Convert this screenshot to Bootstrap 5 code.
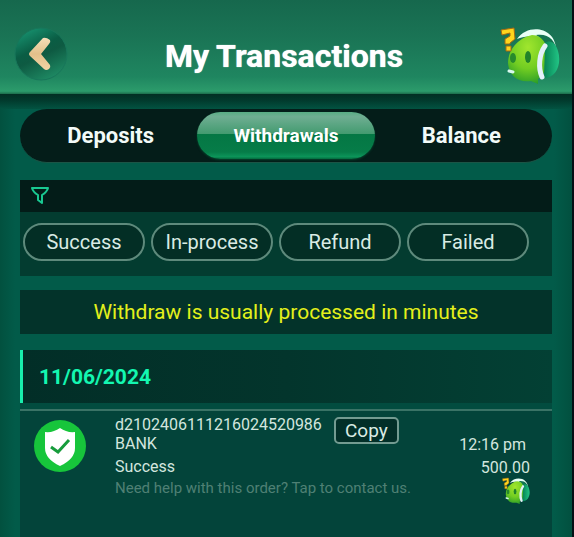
<!DOCTYPE html>
<html lang="en">
<head>
<meta charset="utf-8">
<meta name="viewport" content="width=device-width, initial-scale=1">
<title>My Transactions</title>
<link href="https://cdn.jsdelivr.net/npm/bootstrap@5.3.0/dist/css/bootstrap.min.css" rel="stylesheet">
<style>
body{font-family:Roboto,"Liberation Sans",sans-serif;background:#040f14;color:#d3e6df;line-height:19px}
.screen{margin-right:2px;min-height:100vh;background:linear-gradient(90deg,#02513f,#025b49 15px,#025b49 calc(100% - 18px),#02503f)}
.top-bar{height:94px;padding:10px 12px 0;background:linear-gradient(#16684d,#1a7455 40%,#1f8660 82%,#2c9b6b 97%,#1c6c4b)}
.top-shade{height:15px;background:linear-gradient(#022e23,#01392c 40%,#025341)}
.top-bar h1{font-size:32px;line-height:36px;color:#fff;text-shadow:0 0 1px #fff}
.round-back{width:56px;height:56px}
.helper{width:60px;height:60px}
.content-area{padding:0 20px}
.tabs{background:#041d19;border-bottom:1px solid #1b5546;padding:3px 0}
.tabs button{height:47px;font-size:22px;line-height:26px;color:#f2fbf8;font-weight:700}
.tabs button.active{font-size:19px;color:#fff;background:linear-gradient(#58ad84 0,#6fae92 10%,#439b70 46%,#047744 47%,#067c48 85%,#0c9459 95%,#036b3e);box-shadow:0 1px 2px #03452c}
.filter{margin-top:17px;background:#033c30}
.filter-head{height:32px;background:#031c18;padding:6px 11px}
.chips{padding:11px 3px 15px;gap:6px}
.chip{width:122px;height:38px;border:2px solid #5e8a7c;background:#032e25;color:#d9ebe4;font-size:20px;line-height:24px}
.notice{margin-top:14px;height:44px;background:#03332a;color:#e3f01b;font-size:21px;line-height:45px}
.log{margin-top:16px;background:#03443a;min-height:calc(100vh - 350px)}
.log-date{height:53px;border-left:3px solid #18efad;padding-left:16px;background:linear-gradient(90deg,#022e27,#03352c 50%,#034034);color:#13f7b1;font-size:21px;line-height:54px;font-weight:700}
.log-gap{height:6px;background:#024c3f}
.entry{border-top:2px solid #3a7366;padding:4px 22px 0 13px;font-size:16px}
.badge-ok{width:54px;height:54px;margin-top:5px}
.entry-text{margin-left:28px}
.copy{width:65px;height:27px;border:2px solid #739b91;border-radius:5px;background:#022f28;color:#d9ebe4;font-size:19px;line-height:23px;margin:2px 0 0 12px}
.hint{font-size:15px;color:#4f8074;line-height:24px}
.hint:hover{color:#7aa89b}
.state{margin-top:4px}
.helper-small{width:28px;height:28px}
</style>
<script src="https://cdn.jsdelivr.net/npm/bootstrap@5.3.0/dist/js/bootstrap.bundle.min.js"></script>
</head>
<body>
<svg width="0" height="0" class="position-absolute" aria-hidden="true">
<defs>
<radialGradient id="face" cx=".5" cy=".25" r=".8"><stop offset="0" stop-color="#a1e62e"/><stop offset=".55" stop-color="#72cd22"/><stop offset="1" stop-color="#249928"/></radialGradient>
<linearGradient id="cup" x1="0" x2="1"><stop offset="0" stop-color="#068255"/><stop offset="1" stop-color="#22c585"/></linearGradient>
<symbol id="mascot" viewBox="0 0 60 60">
<path d="M17 13C28 -3 56 1 56 24L47 27C46 14 32 6 17 13Z" fill="#e9fff6"/>
<path d="M36 9C48 7 56 14 57 27L45 25C44 17 41 12 36 9Z" fill="#137451"/>
<path d="M8 37C8 24 18 12 32 9C44 9 50 22 47 37C46 46 42 50 38 53L38 58L31 55C18 57 9 50 8 37Z" fill="url(#face)"/>
<path d="M45 17C50 13 56 17 58 25C62 38 56 52 44 52Z" fill="url(#cup)"/>
<path d="M45 20C39 28 38 42 42 51" fill="none" stroke="#e2f1fa" stroke-width="5" stroke-linecap="round"/>
<ellipse cx="13" cy="32" rx="3" ry="5" fill="#278a2c"/><ellipse cx="28" cy="31" rx="3" ry="6" fill="#218329"/>
<path d="M9 45L13 46" fill="none" stroke="#d9f9ee" stroke-width="3" stroke-linecap="round"/>
<path d="M1 4L14 2L15 13L10 17L10 18L5 18L5 13L10 10L10 7L2 9ZM6 20L11 20L11 25L6 25Z" fill="#ffd51d" stroke="#a56a11" stroke-width="1"/>
</symbol>
</defs>
</svg>
<div class="screen">
<header>
<div class="top-bar d-flex justify-content-between">
<button type="button" class="btn p-0 border-0 round-back mt-3" aria-label="Back">
<svg class="d-block" width="56" height="56" viewBox="0 0 56 56" aria-hidden="true">
<defs><linearGradient id="orb" x1=".2" y1="0" x2=".7" y2="1"><stop offset="0" stop-color="#179471"/><stop offset=".4" stop-color="#0a5d44"/><stop offset=".55" stop-color="#0e5a42"/><stop offset="1" stop-color="#1f8c65"/></linearGradient>
<linearGradient id="gold" x1="0" y1="0" x2="0" y2="1"><stop offset="0" stop-color="#f5dfb9"/><stop offset=".5" stop-color="#e2c08a"/><stop offset="1" stop-color="#f2d5a5"/></linearGradient></defs>
<circle cx="29" cy="28" r="26" fill="url(#orb)" stroke="#18765a" stroke-width="1"/>
<path d="M31 12Q34 11 38 14Q39 16 37 18L29 28L38 39Q39 41 37 43Q34 45 32 43L18 30Q16 28 18 26Z" fill="url(#gold)"/>
</svg>
</button>
<h1 class="fw-bold m-0 mt-4 pt-1">My Transactions</h1>
<button type="button" class="btn p-0 border-0 helper mt-3" aria-label="Support"><svg class="d-block w-100 h-100" aria-hidden="true"><use href="#mascot"/></svg></button>
</div>
<div class="top-shade"></div>
</header>
<main class="content-area">
<nav class="tabs d-flex rounded-pill" aria-label="Transaction type">
<button type="button" class="btn border-0 rounded-pill py-0 ps-1 pe-0 flex-fill col-4">Deposits</button>
<button type="button" class="btn border-0 rounded-pill p-0 flex-fill col-4 active" aria-current="page">Withdrawals</button>
<button type="button" class="btn border-0 rounded-pill py-0 ps-0 pe-1 flex-fill col-4">Balance</button>
</nav>
<section class="filter" aria-label="Filter">
<div class="filter-head"><svg class="d-block" width="18" height="19" viewBox="0 0 18 19" fill="none" stroke="#19c891" stroke-width="2" stroke-linejoin="round" aria-hidden="true"><path d="M1 2H17Q16 6 11 9V17L7 14V9Q2 6 1 2Z"/></svg></div>
<div class="chips d-flex flex-wrap">
<button type="button" class="btn chip rounded-pill p-0">Success</button>
<button type="button" class="btn chip rounded-pill p-0">In-process</button>
<button type="button" class="btn chip rounded-pill p-0">Refund</button>
<button type="button" class="btn chip rounded-pill p-0">Failed</button>
</div>
</section>
<div class="notice text-center">Withdraw is usually processed in minutes</div>
<section class="log">
<div class="log-date">11/06/2024</div>
<div class="log-gap"></div>
<div class="entry d-flex align-items-start">
<svg class="badge-ok flex-shrink-0" viewBox="0 0 54 54" role="img" aria-label="Successful"><circle cx="27" cy="26" r="26" fill="#17c53b"/><path d="M27 8Q34 13 42 12V28Q42 39 27 46Q12 39 12 28V12Q20 13 27 8Z" fill="#fff"/><path d="M18 27L25 32L36 20" fill="none" stroke="#179c3c" stroke-width="3"/></svg>
<div class="entry-text flex-grow-1">
<div class="d-flex">
<div><div>d2102406111216024520986</div><div>BANK</div></div>
<button type="button" class="btn copy p-0">Copy</button>
</div>
<div class="state">Success</div>
<a href="#" class="hint text-decoration-none text-nowrap">Need help with this order? Tap to contact us.</a>
</div>
<div class="text-end d-flex flex-column align-items-end">
<div class="mt-3 pt-1 pe-1 text-nowrap">12:16 pm</div>
<div class="state">500.00</div>
<button type="button" class="btn border-0 p-0 helper-small" aria-label="Contact support"><svg class="d-block w-100 h-100" aria-hidden="true"><use href="#mascot"/></svg></button>
</div>
</div>
</section>
</main>
</div>
</body>
</html>
